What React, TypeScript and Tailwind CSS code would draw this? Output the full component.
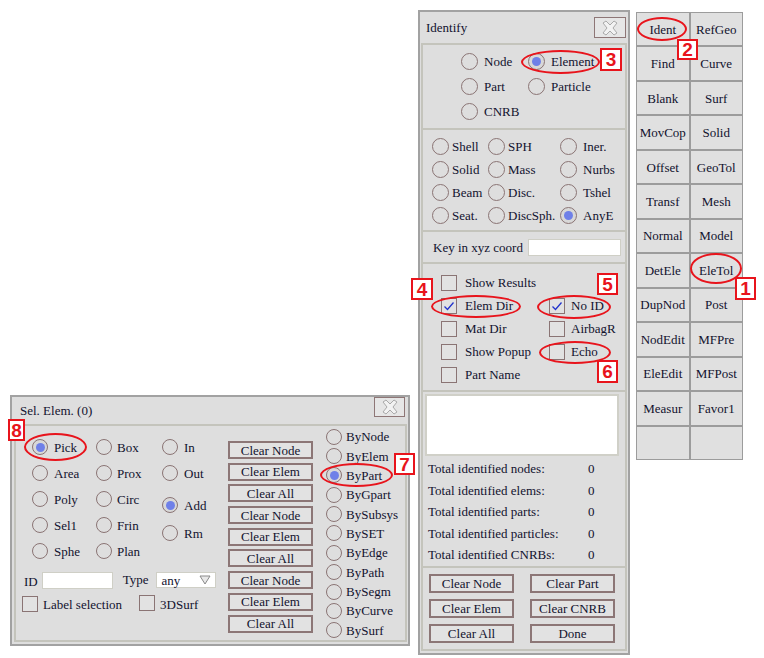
import React from 'react';

const ink = 'text-[#12122e]';

function Radio({ on, size = 17 }: { on?: boolean; size?: number }) {
  return (
    <span
      className={`inline-flex shrink-0 items-center justify-center rounded-full border-[1.5px] border-[#8a7474] ${size === 17 ? 'w-[17px] h-[17px]' : 'w-[16px] h-[16px]'} ${on ? 'bg-[#d8d8d8]' : ''}`}
    >
      {on && <span className="w-[9px] h-[9px] rounded-full bg-[#6f80e8]" />}
    </span>
  );
}

function Check({ on }: { on?: boolean }) {
  return (
    <span className="inline-flex shrink-0 items-center justify-center w-[16px] h-[16px] border-[1.5px] border-[#8a7474] bg-[#e2e2e2]">
      {on && (
        <svg width="12" height="10" viewBox="0 0 12 10">
          <path d="M1.5 5.5 L4.5 8.5 L10.5 1.5" fill="none" stroke="#2233cc" strokeWidth="1.3" />
        </svg>
      )}
    </span>
  );
}

function RLabel({ children, on, gap = 'gap-[6px]', size }: { children: React.ReactNode; on?: boolean; gap?: string; size?: number }) {
  return (
    <div className={`flex items-center ${gap} h-full`}>
      <Radio on={on} size={size} />
      <span>{children}</span>
    </div>
  );
}

function CloseBox({ w = 'w-[32px] h-[21px]' }: { w?: string }) {
  return (
    <div className={`${w} border-[1.5px] border-[#8e7676] bg-[#e6e6e6] flex items-center justify-center`}>
      <svg width="20" height="16" viewBox="0 0 20 16">
        <path
          d="M3 3 L6 1 L10 5 L14 1 L17 3 L13 8 L17 13 L14 15 L10 11 L6 15 L3 13 L7 8 Z"
          fill="#f2f2f2"
          stroke="#a9a9a9"
          strokeWidth="1"
        />
      </svg>
    </div>
  );
}

function Btn({ children, cls }: { children: React.ReactNode; cls: string }) {
  return (
    <div className={`${cls} border-2 border-[#8c7676] bg-[#e2e2e2] flex items-center justify-center leading-none`}>
      {children}
    </div>
  );
}

function Identify() {
  return (
    <div className="absolute left-[418px] top-[10px] w-[212px] h-[645px] border-2 border-[#a2a2a2] bg-[#dedede]">
      {/* title */}
      <div className="h-[31px] flex items-center justify-between pl-[6px] pr-[2px]">
        <span>Identify</span>
        <CloseBox />
      </div>
      <div className="ml-[1px] w-[206px] h-[608px] border-2 border-[#c4c4bc]">
        {/* entity type */}
        <div className="h-[85px] border-b-2 border-[#c4c4bc] pt-[4px] pl-[38px] grid grid-cols-[67px_auto] auto-rows-[25px]">
          <RLabel>Node</RLabel>
          <RLabel on>Element</RLabel>
          <RLabel>Part</RLabel>
          <RLabel>Particle</RLabel>
          <RLabel>CNRB</RLabel>
        </div>
        {/* element types */}
        <div className="h-[102px] border-b-2 border-[#c4c4bc] pt-[5px] pl-[9px] grid grid-cols-[56px_72px_auto] auto-rows-[23px]">
          {[
            ['Shell', 'SPH', 'Iner.'],
            ['Solid', 'Mass', 'Nurbs'],
            ['Beam', 'Disc.', 'Tshel'],
            ['Seat.', 'DiscSph.', 'AnyE'],
          ].map((row) => (
            <React.Fragment key={row[0]}>
              <RLabel gap="gap-[3px]">{row[0]}</RLabel>
              <RLabel gap="gap-[3px]">{row[1]}</RLabel>
              <RLabel gap="gap-[6px]" on={row[2] === 'AnyE'}>{row[2]}</RLabel>
            </React.Fragment>
          ))}
        </div>
        {/* key in */}
        <div className="h-[32px] border-b-2 border-[#c4c4bc] flex items-center justify-between pl-[10px] pr-[4px]">
          <span>Key in xyz coord</span>
          <div className="w-[93px] h-[17px] bg-white border border-[#cfcfc6]" />
        </div>
        {/* options */}
        <div className="h-[128px] border-b-2 border-[#c4c4bc] pt-[7px] pl-[18px] grid grid-cols-[108px_auto] auto-rows-[23px]">
          {[
            ['Show Results', false, '', false],
            ['Elem Dir', true, 'No ID', true],
            ['Mat Dir', false, 'AirbagR', false],
            ['Show Popup', false, 'Echo', false],
            ['Part Name', false, '', false],
          ].map(([a, aon, b, bon]) => (
            <React.Fragment key={a as string}>
              <div className="flex items-center gap-[8px] whitespace-nowrap">
                <Check on={aon as boolean} />
                <span>{a as string}</span>
              </div>
              <div className="flex items-center gap-[6px]">
                {b ? (
                  <>
                    <Check on={bon as boolean} />
                    <span>{b as string}</span>
                  </>
                ) : null}
              </div>
            </React.Fragment>
          ))}
        </div>
        {/* list + totals */}
        <div className="h-[176px] border-b-2 border-[#c4c4bc] pt-[2px]">
          <div className="mx-[2px] w-[194px] h-[62px] bg-white border-2 border-[#d0d0c8]" />
          <div className="pt-[2px] pl-[5px] grid grid-cols-[160px_auto] auto-rows-[21.5px] items-center">
            {['nodes', 'elems', 'parts', 'particles', 'CNRBs'].map((k) => (
              <React.Fragment key={k}>
                <span>Total identified {k}:</span>
                <span>0</span>
              </React.Fragment>
            ))}
          </div>
        </div>
        {/* buttons */}
        <div className="pt-[6px] pl-[6px] grid grid-cols-[85px_85px] gap-x-[16px] gap-y-[6px]">
          <Btn cls="h-[19px]">Clear Node</Btn>
          <Btn cls="h-[19px]">Clear Part</Btn>
          <Btn cls="h-[19px]">Clear Elem</Btn>
          <Btn cls="h-[19px]">Clear CNRB</Btn>
          <Btn cls="h-[19px]">Clear All</Btn>
          <Btn cls="h-[19px]">Done</Btn>
        </div>
      </div>
    </div>
  );
}

const toolNames = [
  'Ident', 'RefGeo', 'Find', 'Curve', 'Blank', 'Surf', 'MovCop', 'Solid', 'Offset', 'GeoTol',
  'Transf', 'Mesh', 'Normal', 'Model', 'DetEle', 'EleTol', 'DupNod', 'Post', 'NodEdit', 'MFPre',
  'EleEdit', 'MFPost', 'Measur', 'Favor1', '', '',
];

function ToolGrid() {
  return (
    <div className="absolute left-[636px] top-[12px] w-[107px] h-[448px] bg-[#9c9c9c] p-[1px] grid grid-cols-2 grid-rows-[repeat(13,minmax(0,1fr))] gap-[2px]">
      {toolNames.map((n, i) => (
        <div key={i} className="bg-[#e0e0e0] flex items-center justify-center">
          {n}
        </div>
      ))}
    </div>
  );
}

const byNames = ['ByNode', 'ByElem', 'ByPart', 'ByGpart', 'BySubsys', 'BySET', 'ByEdge', 'ByPath', 'BySegm', 'ByCurve', 'BySurf'];
const clearNames = ['Clear Node', 'Clear Elem', 'Clear All', 'Clear Node', 'Clear Elem', 'Clear All', 'Clear Node', 'Clear Elem', 'Clear All'];

function SelElem() {
  return (
    <div className="absolute left-[10px] top-[395px] w-[400px] h-[251px] border-2 border-[#a2a2a2] bg-[#dedede]">
      <div className="h-[27px] flex justify-between pl-[8px] pr-[3px]">
        <span className="self-center">Sel. Elem. (0)</span>
        <CloseBox w="w-[31px] h-[20px]" />
      </div>
      <div className="ml-[2px] w-[393px] h-[218px] border-2 border-[#c4c4bc] flex">
        {/* left */}
        <div className="w-[212px]">
          <div className="flex pl-[16px] pt-[8px]">
            <div className="w-[64px] flex flex-col">
              {['Pick', 'Area', 'Poly', 'Sel1', 'Sphe'].map((n) => (
                <div key={n} className="h-[26px]">
                  <RLabel size={16} on={n === 'Pick'}>{n}</RLabel>
                </div>
              ))}
            </div>
            <div className="w-[66px] flex flex-col">
              {['Box', 'Prox', 'Circ', 'Frin', 'Plan'].map((n) => (
                <div key={n} className="h-[26px]">
                  <RLabel size={16} gap="gap-[5px]">{n}</RLabel>
                </div>
              ))}
            </div>
            <div className="flex flex-col">
              <div className="h-[26px]"><RLabel size={16}>In</RLabel></div>
              <div className="h-[26px]"><RLabel size={16}>Out</RLabel></div>
              <div className="h-[26px] mt-[6px]"><RLabel size={16} on>Add</RLabel></div>
              <div className="h-[26px] mt-[2px]"><RLabel size={16}>Rm</RLabel></div>
            </div>
          </div>
          <div className="mt-[8px] h-[17px] flex items-center pl-[8px]">
            <span className="mt-[2px]">ID</span>
            <div className="ml-[4px] w-[71px] h-[17px] bg-white border border-[#cfcfc6]" />
            <span className="ml-[10px] -mt-[3px]">Type</span>
            <div className="ml-[7px] w-[60px] h-[16px] -mt-[1px] bg-white border border-[#cfcfc6] flex items-center justify-between pl-[5px] pr-[4px]">
              <span className="leading-none">any</span>
              <svg width="12" height="10" viewBox="0 0 12 10">
                <path d="M1 1 L11 1 L6 9 Z" fill="#e8e8e8" stroke="#8a8a8a" strokeWidth="1" />
              </svg>
            </div>
          </div>
          <div className="mt-[7px] h-[16px] flex items-center pl-[6px]">
            <Check />
            <span className="ml-[5px] whitespace-nowrap">Label selection</span>
            <span className="ml-[17px]"><Check /></span>
            <span className="ml-[5px]">3DSurf</span>
          </div>
        </div>
        {/* clear buttons */}
        <div className="w-[85px] pt-[15px] flex flex-col gap-[3.7px]">
          {clearNames.map((n, i) => (
            <Btn key={i} cls="h-[18px]">{n}</Btn>
          ))}
        </div>
        {/* by */}
        <div className="pl-[13px] pt-[1px] flex flex-col">
          {byNames.map((n) => (
            <div key={n} className="h-[19.6px]">
              <RLabel size={16} gap="gap-[4px]" on={n === 'ByPart'}>{n}</RLabel>
            </div>
          ))}
        </div>
      </div>
    </div>
  );
}

function Ring({ cls }: { cls: string }) {
  return <div className={`absolute ${cls} rounded-[50%] border-[2.5px] border-[#e8141c] pointer-events-none`} />;
}

function Tag({ n, cls }: { n: string; cls: string }) {
  return (
    <div
      className={`absolute ${cls} bg-white border-2 border-[#e8141c] text-[#e8141c] flex items-center justify-center font-bold text-[19px] leading-none`}
      style={{ fontFamily: '"Liberation Sans", Arial, sans-serif' }}
    >
      {n}
    </div>
  );
}

export default function App() {
  return (
    <div
      className={`relative w-[764px] h-[658px] bg-white overflow-hidden text-[13px] leading-none ${ink}`}
      style={{ fontFamily: '"Liberation Serif", "Times New Roman", serif' }}
    >
      <Identify />
      <ToolGrid />
      <SelElem />

      {/* annotations */}
      <Ring cls="left-[521px] top-[50px] w-[79px] h-[24px]" />
      <Tag n="3" cls="left-[600px] top-[48px] w-[22px] h-[23px]" />
      <Ring cls="left-[637px] top-[17px] w-[50px] h-[24px]" />
      <Tag n="2" cls="left-[677px] top-[39px] w-[21px] h-[21px]" />
      <Ring cls="left-[690px] top-[253px] w-[52px] h-[31px]" />
      <Tag n="1" cls="left-[735px] top-[277px] w-[21px] h-[23px]" />
      <Ring cls="left-[431px] top-[295px] w-[90px] h-[23px]" />
      <Tag n="4" cls="left-[411px] top-[278px] w-[22px] h-[22px]" />
      <Ring cls="left-[537px] top-[295px] w-[74px] h-[24px]" />
      <Tag n="5" cls="left-[597px] top-[273px] w-[21px] h-[22px]" />
      <Ring cls="left-[539px] top-[341px] w-[72px] h-[23px]" />
      <Tag n="6" cls="left-[597px] top-[360px] w-[21px] h-[23px]" />
      <Ring cls="left-[320px] top-[463px] w-[73px] h-[24px]" />
      <Tag n="7" cls="left-[394px] top-[453px] w-[21px] h-[22px]" />
      <Ring cls="left-[24px] top-[433px] w-[63px] h-[28px]" />
      <Tag n="8" cls="left-[8px] top-[419px] w-[17px] h-[22px]" />
    </div>
  );
}
